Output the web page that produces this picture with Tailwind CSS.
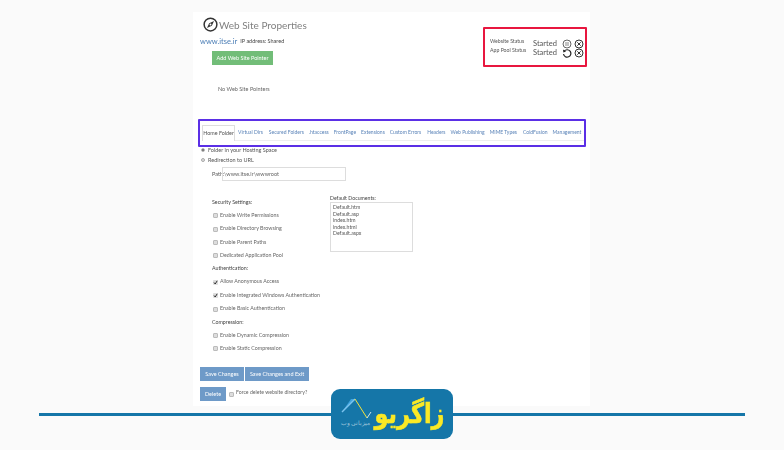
<!DOCTYPE html>
<html lang="en">
<head>
    <meta charset="UTF-8">
    <title>Web Site Properties</title>
    <script src="https://cdn.jsdelivr.net/npm/@tailwindcss/browser@4"></script>
</head>
<body class="relative w-[784px] h-[450px] overflow-hidden bg-[#fafafa] font-['Lato',sans-serif] text-[#555]">
    <div class="ml-[193px] mt-[12px] w-[397px] h-[394px] bg-white relative blur-[0.3px]">
        <!-- header -->
        <div class="flex items-center gap-[1px] pl-[10px] pt-[1px] h-[24px]">
            <svg width="15" height="15" viewBox="0 0 16 16" fill="none"><circle cx="8" cy="8" r="6.8" stroke="#333" stroke-width="1.6"/><path d="M11.8 4.2 9.4 9.4 4.2 11.8 6.6 6.6Z" fill="#333"/><circle cx="8" cy="8" r="1" fill="#fff"/></svg>
            <span class="text-[10px] leading-none text-[#808080]">Web Site Properties</span>
        </div>
        <div class="flex items-start pl-[7px] h-[15px]">
            <a class="text-[7.5px] leading-[12px] text-[#4a7db5]">www.itse.ir</a>
            <span class="ml-[3px] text-[5.5px] leading-[10px] text-[#444]">IP address: Shared</span>
        </div>
        <button class="block ml-[19px] w-[61px] h-[14px] bg-[#72bd78] text-white text-[5.5px] leading-[14px] text-center">Add Web Site Pointer</button>
        <p class="ml-[25px] mt-[19px] text-[5.5px] leading-[10px] text-[#666]">No Web Site Pointers</p>

        <!-- status -->
        <div class="absolute left-[290px] top-[15px] w-[104px] h-[40px] border-2 border-[#e8173f] rounded-[1px] pl-[5px] pt-[10px]">
            <div class="flex items-center h-[9px]">
                <span class="w-[43px] text-[5.2px] text-[#555] -mt-[4px]">Website Status</span>
                <span class="text-[7.5px] text-[#555] w-[29px]">Started</span>
                <svg width="10" height="10" viewBox="0 0 10 10" fill="none"><circle cx="5" cy="5" r="4" stroke="#666" stroke-width="1"/><path d="M4 3v4M6 3v4" stroke="#888" stroke-width="1"/></svg>
                <svg class="ml-[2px]" width="10" height="10" viewBox="0 0 10 10" fill="none"><circle cx="5" cy="5" r="4" stroke="#333" stroke-width="1"/><path d="M3.3 3.3l3.4 3.4M6.7 3.3l-3.4 3.4" stroke="#333" stroke-width="1"/></svg>
            </div>
            <div class="flex items-center h-[9px]">
                <span class="w-[43px] text-[5.2px] text-[#555] -mt-[4px]">App Pool Status</span>
                <span class="text-[7.5px] text-[#555] w-[29px]">Started</span>
                <svg width="10" height="10" viewBox="0 0 10 10" fill="none"><path d="M2.2 3.2A3.7 3.7 0 1 1 1.5 6" stroke="#222" stroke-width="1.2"/><path d="M1 1.6 4 3.4 1.4 4.6Z" fill="#222"/></svg>
                <svg class="ml-[2px]" width="10" height="10" viewBox="0 0 10 10" fill="none"><circle cx="5" cy="5" r="4" stroke="#333" stroke-width="1"/><path d="M3.3 3.3l3.4 3.4M6.7 3.3l-3.4 3.4" stroke="#333" stroke-width="1"/></svg>
            </div>
        </div>

        <!-- tabs -->
        <div class="mt-[25px] ml-[5px] w-[388px] h-[28px] border-2 border-[#5b2fe6] rounded-[1px] pl-[2px] pb-[4px] flex items-end">
            <div class="flex items-stretch h-[16px] w-full border-b border-[#eee] text-[5px] whitespace-nowrap text-[#5a83b8]">
                <span class="w-[33px] -mb-[1px] bg-white border border-b-0 border-[#ddd] text-[5.4px] text-[#555] flex items-center justify-center">Home Folder</span>
                <span class="ml-[3px] flex items-center">Virtual Dirs</span>
                <span class="ml-[6px] flex items-center">Secured Folders</span>
                <span class="ml-[5px] flex items-center">.htaccess</span>
                <span class="ml-[5px] flex items-center">FrontPage</span>
                <span class="ml-[5px] flex items-center">Extensions</span>
                <span class="ml-[5px] flex items-center">Custom Errors</span>
                <span class="ml-[6px] flex items-center">Headers</span>
                <span class="ml-[5px] flex items-center">Web Publishing</span>
                <span class="ml-[5px] flex items-center">MIME Types</span>
                <span class="ml-[6px] flex items-center">ColdFusion</span>
                <span class="ml-[5px] flex items-center">Management</span>
            </div>
        </div>

        <!-- home folder -->
        <div class="pl-[8px] text-[5.5px] text-[#555]">
            <label class="flex items-center gap-[3px] h-[10px] -mt-[2px]"><span class="w-[4px] h-[4px] rounded-full bg-[#666] border border-[#bbb]"></span>Folder in your Hosting Space</label>
            <label class="flex items-center gap-[3px] h-[10px]"><span class="w-[4px] h-[4px] rounded-full bg-[#ddd] border border-[#aaa]"></span>Redirection to URL</label>
            <div class="flex items-center ml-[11px] mt-[2px]">
                <span class="w-[10px]">Path:</span>
                <span class="w-[124px] h-[14px] border border-[#ddd] text-[5.5px] leading-[12px] pl-[1px] text-[#666]">\www.itse.ir\wwwroot</span>
            </div>
        </div>

        <div class="flex mt-[15px]">
            <div class="w-[137px] pl-[20px] text-[5.3px] text-[#666] whitespace-nowrap">
                <p class="-ml-[1px] h-[13.3px] leading-[13.3px] text-[#444]">Security Settings:</p>
                <label class="flex items-center gap-[2px] h-[13.3px]"><span class="w-[5px] h-[5px] bg-[#ddd] border border-[#bbb] rounded-[1px]"></span>Enable Write Permissions</label>
                <label class="flex items-center gap-[2px] h-[13.3px]"><span class="w-[5px] h-[5px] bg-[#ddd] border border-[#bbb] rounded-[1px]"></span>Enable Directory Browsing</label>
                <label class="flex items-center gap-[2px] h-[13.3px]"><span class="w-[5px] h-[5px] bg-[#ddd] border border-[#bbb] rounded-[1px]"></span>Enable Parent Paths</label>
                <label class="flex items-center gap-[2px] h-[13.3px]"><span class="w-[5px] h-[5px] bg-[#ddd] border border-[#bbb] rounded-[1px]"></span>Dedicated Application Pool</label>
                <p class="-ml-[1px] h-[13.3px] leading-[13.3px] text-[#444]">Authentication:</p>
                <label class="flex items-center gap-[2px] h-[13.3px]"><svg width="5" height="5" viewBox="0 0 5 5"><rect width="5" height="5" rx="1" fill="#ddd"/><path d="M1 2.5 2.2 4 4.2 .8" stroke="#333" fill="none"/></svg>Allow Anonymous Access</label>
                <label class="flex items-center gap-[2px] h-[13.3px]"><svg width="5" height="5" viewBox="0 0 5 5"><rect width="5" height="5" rx="1" fill="#ddd"/><path d="M1 2.5 2.2 4 4.2 .8" stroke="#333" fill="none"/></svg>Enable Integrated Windows Authentication</label>
                <label class="flex items-center gap-[2px] h-[13.3px]"><span class="w-[5px] h-[5px] bg-[#ddd] border border-[#bbb] rounded-[1px]"></span>Enable Basic Authentication</label>
                <p class="-ml-[1px] h-[13.3px] leading-[13.3px] text-[#444]">Compression:</p>
                <label class="flex items-center gap-[2px] h-[13.3px]"><span class="w-[5px] h-[5px] bg-[#ddd] border border-[#bbb] rounded-[1px]"></span>Enable Dynamic Compression</label>
                <label class="flex items-center gap-[2px] h-[13.3px]"><span class="w-[5px] h-[5px] bg-[#ddd] border border-[#bbb] rounded-[1px]"></span>Enable Static Compression</label>
            </div>
            <div class="text-[5.2px] -mt-[1px]">
                <p class="leading-[7px] text-[#444]">Default Documents:</p>
                <div class="w-[83px] h-[50px] border border-[#ddd] leading-[6.5px] pl-[2px] pt-[1px] text-[#555]">
                    <p>Default.htm</p><p>Default.asp</p><p>index.htm</p><p>index.html</p><p>Default.aspx</p>
                </div>
            </div>
        </div>

        <!-- actions -->
        <div class="flex gap-[1px] ml-[7px] mt-[11.5px]">
            <button class="w-[44px] h-[14px] bg-[#6e9ac8] text-white text-[5.5px]">Save Changes</button>
            <button class="w-[64px] h-[14px] bg-[#6e9ac8] text-white text-[5.5px]">Save Changes and Exit</button>
        </div>
        <div class="flex items-center ml-[7px] mt-[6px] text-[5.2px] text-[#666]">
            <button class="w-[26px] h-[14px] bg-[#6e9ac8] text-white text-[5.5px]">Delete</button>
            <span class="ml-[3px] w-[5px] h-[5px] bg-[#ddd] border border-[#bbb] rounded-[1px]"></span>
            <span class="ml-[2px] -mt-[2px]">Force delete website directory?</span>
        </div>
    </div>

    <!-- footer rule + logo -->
    <div class="absolute left-[39px] top-[413px] w-[706px] h-[3px] bg-[#1576a8]"></div>
    <div class="absolute left-[331px] top-[389px] w-[122px] h-[50px] rounded-[9px] bg-[#1576a8] flex items-center justify-end pr-[9px]">
        <svg class="absolute left-[10px] top-[9px]" width="32" height="22" viewBox="0 0 32 22" fill="none"><path d="M1 14 14 1 10 1Z" fill="#3fa4e0"/><path d="M1 14 14 1" stroke="#7cc4ee" stroke-width="1.5"/><path d="M14 1 26 20" stroke="#f4e23a" stroke-width="1"/><path d="M26 20 30 14" stroke="#cfe6f2" stroke-width="1"/></svg>
        <span class="absolute left-[10px] top-[30px] w-[29px] whitespace-nowrap text-[5.5px] leading-[8px] text-center text-[#9cc3da] font-['Noto_Sans',sans-serif]" dir="rtl">میزبانی وب</span>
        <span class="relative text-[28px] leading-none font-bold text-[#fbe925] font-['DejaVu_Sans',sans-serif] [-webkit-text-stroke:0.6px_#fbe925] scale-x-[0.8] origin-right" dir="rtl">زاگریو</span>
    </div>
</body>
</html>
